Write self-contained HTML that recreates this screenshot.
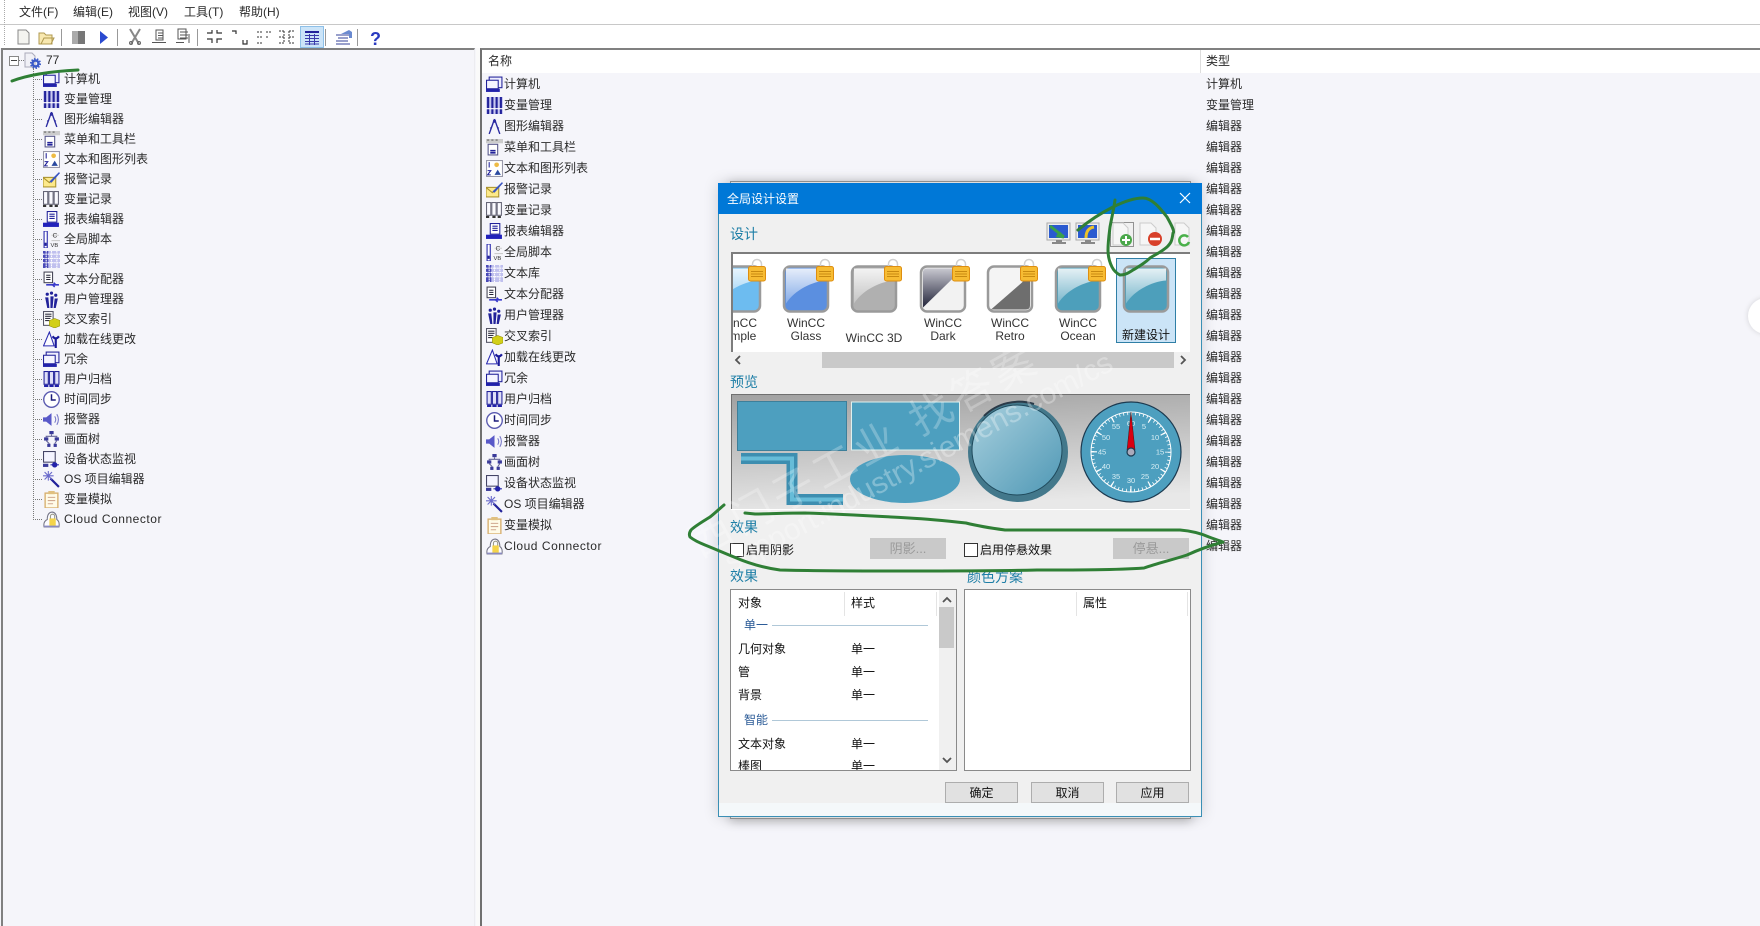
<!DOCTYPE html>
<html lang="zh"><head><meta charset="utf-8"><title>WinCC</title>
<style>
html,body{margin:0;padding:0;width:1760px;height:926px;overflow:hidden;background:#f5f5fa}
body{font:12px/16px "Liberation Sans","Noto Sans CJK SC",sans-serif;color:#2a2a2a;position:relative}
.a{position:absolute;white-space:nowrap}
.t{height:20px;line-height:20px;padding-left:64px;position:relative}
.t svg{position:absolute;left:43px;top:2px;width:17px;height:17px}
.t:before{content:"";position:absolute;left:33px;width:9px;top:10px;border-top:1px dotted #777}
.u{height:21px;line-height:21px;padding-left:504px;position:relative}
.u svg{position:absolute;left:486px;top:2px;width:17px;height:17px}
.y{height:21px;line-height:21px}
.s{letter-spacing:.53px}
.l{color:#1d7ea6;font-size:14px;line-height:18px}
.b{background:#c9c9c9;color:#9a9a9a;text-align:center;line-height:21px;height:21px;width:76px;font-size:13px}
.k{background:#e1e1e1;border:1px solid #adadad;box-sizing:border-box;width:73px;height:21px;text-align:center;line-height:20px;color:#111}
.c{width:12px;height:12px;border:1px solid #333;background:#fff}
.w{font-size:12px;line-height:12.5px;text-align:center;color:#333;width:60px}
.d{color:#111}
</style></head><body>
<svg width="0" height="0" style="position:absolute"><defs>
<symbol id="i1" viewBox="0 0 16 16"><rect x="3" y="1" width="12" height="10" fill="#eef" stroke="#22229a"/><rect x="0.5" y="4" width="11" height="8" fill="#f4f4ff" stroke="#22229a"/><rect x="0" y="12" width="13" height="3" fill="#2222aa"/></symbol>
<symbol id="i2" viewBox="0 0 16 16"><rect width="16" height="16" fill="#c9c9f0"/><path d="M2 0v16M6 0v16M10 0v16M14 0v16" stroke="#22229a" stroke-width="2" /><path d="M0 11h16" stroke="#fff"/></symbol>
<symbol id="i3" viewBox="0 0 16 16"><path d="M8 1 3 15M8 1l5 14M5 10l-1-1M11 10l1-1" fill="none" stroke="#2a2aa0" stroke-width="1.3"/><circle cx="8" cy="3" r="1.5" fill="#2a2aa0"/></symbol>
<symbol id="i4" viewBox="0 0 16 16"><rect y="0" width="16" height="4" fill="#ccc"/><path d="M1 1h2M5 1h2M9 1h2" stroke="#666"/><rect x="2" y="5" width="9" height="10" fill="#fff" stroke="#558"/><path d="M4 11h5M4 13h5" stroke="#22229a" stroke-width="1.5"/></symbol>
<symbol id="i5" viewBox="0 0 16 16"><rect x=".5" y=".5" width="15" height="15" fill="#fff" stroke="#99a"/><circle cx="10" cy="4.500" r="2.200" fill="#eebb44"/><path d="M8 14l3-5 3 5z" fill="#2a4aa0"/><path d="M3 2v5M1.500 10h3l-3 4h3" stroke="#22229a" fill="none"/></symbol>
<symbol id="i6" viewBox="0 0 16 16"><rect x="0" y="6" width="12" height="9" fill="#fde98a" stroke="#a9912d"/><path d="M0 6l6 5 6-5" fill="none" stroke="#a9912d"/><path d="M6 10 15 1l1 1-8 9z" fill="#3a55c0"/></symbol>
<symbol id="i7" viewBox="0 0 16 16"><g fill="#fafaff" stroke="#667"><rect x=".5" y=".5" width="4" height="12"/><rect x="5.500" y=".5" width="4" height="12"/><rect x="10.500" y=".5" width="4" height="12"/></g><path d="M0 14h3M6 14h3M11 14h3" stroke="#333" stroke-width="2"/></symbol>
<symbol id="i8" viewBox="0 0 16 16"><rect x="4" y="0.500" width="9" height="10" fill="#fff" stroke="#22229a"/><path d="M6 3h5M6 5h5M6 7h5" stroke="#22229a"/><path d="M0 11h15v4H0z" fill="#2222bb"/></symbol>
<symbol id="i9" viewBox="0 0 16 16"><rect x="1" y="0" width="3" height="16" fill="#fff" stroke="#2222aa"/><rect x="1.500" y="11" width="2" height="3" fill="#22229a"/><path d="M8 4h7M8 9h8" stroke="#ccc"/><text x="9" y="6" font-size="6" fill="#333" font-family="Liberation Sans">C</text><text x="7" y="15" font-size="5.500" fill="#333" font-family="Liberation Sans">VB</text></symbol>
<symbol id="i10" viewBox="0 0 16 16"><rect width="16" height="16" fill="#c0c0ee"/><rect x="0" y="0" width="5" height="16" fill="#4a4ab8"/><path d="M0 3h16M0 7h16M0 11h16M3 0v16M8 0v16M13 0v16" stroke="#fff" stroke-dasharray="1.500 .6"/></symbol>
<symbol id="i11" viewBox="0 0 16 16"><rect x="1" y="1" width="8" height="10" fill="#fff" stroke="#445"/><path d="M3 4h4M3 6h4M3 8h4" stroke="#223"/><path d="M3 13h9l-2-2M15 13H9l2 2" stroke="#3a3acb" stroke-width="1.500" fill="none"/></symbol>
<symbol id="i12" viewBox="0 0 16 16"><g fill="#22229a"><circle cx="4" cy="3" r="1.500"/><circle cx="8" cy="2" r="1.500"/><circle cx="12" cy="4" r="1.500"/><path d="M2 6h3l1 10H4zM7 5h3l-1 11H7zM11 7h3l-2 9h-2z"/></g></symbol>
<symbol id="i13" viewBox="0 0 16 16"><rect x="0.500" y="0.500" width="9" height="13" fill="#fff" stroke="#556"/><path d="M2 3h6M2 5h6M2 7h5M2 9h4" stroke="#334"/><path d="M6 9l5-2 5 2v5l-5 2-5-2z" fill="#d2cf18" stroke="#8a8700" stroke-width=".5"/></symbol>
<symbol id="i14" viewBox="0 0 16 16"><path d="M6 1 .5 14h10z" fill="#fafaff" stroke="#2a2ab0"/><path d="M12 6v10" stroke="#1a1a9a" stroke-width="2"/><path d="M9 5q3 4 6 0" fill="none" stroke="#1a1a9a" stroke-width="2"/></symbol>
<symbol id="i16" viewBox="0 0 16 16"><g fill="#e0e0f8" stroke="#22229a"><rect x="1" y=".5" width="4" height="12"/><rect x="6" y=".5" width="4" height="12"/><rect x="11" y=".5" width="4" height="12"/></g><path d="M1 14h4M6 14h4M11 14h4" stroke="#2222aa" stroke-width="2"/></symbol>
<symbol id="i17" viewBox="0 0 16 16"><circle cx="8" cy="8" r="7.300" fill="#fff" stroke="#5a5ab0" stroke-width="1.300"/><path d="M8 3v5.500h4" fill="none" stroke="#1a1a7a" stroke-width="1.400"/></symbol>
<symbol id="i18" viewBox="0 0 16 16"><path d="M0 6h3l5-4v12l-5-4H0z" fill="#5858c8"/><path d="M11 5q2 3 0 6M13 3q3 5 0 10" fill="none" stroke="#7878c8"/></symbol>
<symbol id="i19" viewBox="0 0 16 16"><g fill="#3a3a9a"><rect x="6" y="0" width="4" height="3"/><rect x="1" y="6" width="4" height="3"/><rect x="11" y="6" width="4" height="3"/><rect x="4" y="12" width="3" height="3"/><rect x="10" y="12" width="3" height="3"/></g><path d="M8 3v2M3 6V5h10v1M3 9l3 3M13 9l-2 3" stroke="#669" fill="none"/></symbol>
<symbol id="i20" viewBox="0 0 16 16"><rect x=".5" y=".5" width="11" height="10" fill="#f4f4ff" stroke="#446"/><rect y="12" width="5" height="3" fill="#3a3a9a"/><circle cx="11" cy="13" r="2.500" fill="#2222aa"/><path d="M7 13h8" stroke="#2222aa"/></symbol>
<symbol id="i21" viewBox="0 0 16 16"><path d="M7 7l8 8" stroke="#22229a" stroke-width="2"/><path d="M5 0v9M0 4.500h10M1.500 1l7 7M8.500 1l-7 7" stroke="#6a6acb"/></symbol>
<symbol id="i22" viewBox="0 0 16 16"><rect x="2" y="2" width="12" height="14" fill="#fffbe8" stroke="#d8b070" stroke-width="1.300"/><rect x="5" y="0" width="6" height="3" fill="#e0c080"/><path d="M4.500 6h7M4.500 9h7M4.500 12h5" stroke="#d0a890"/></symbol>
<symbol id="i23" viewBox="0 0 16 16"><path d="M1 15q-1-5 3-7 0-7 5-7 4 1 4 7 3 2 2 7z" fill="#fbfbff" stroke="#778"/><rect x="6" y="7" width="6" height="7" fill="#f5d44a"/><path d="M7 7V5a2 2 0 0 1 4 0v2" fill="none" stroke="#998"/><path d="M1 14.500h14" stroke="#8a8ac0" stroke-width="1.500"/></symbol>
<symbol id="lock" viewBox="0 0 18 23"><path d="M4.500 8V5.500a4.500 4.500 0 0 1 9 0V8" fill="none" stroke="#d0d0d0" stroke-width="1.500"/><rect x=".5" y="8" width="17" height="14.500" rx="2" fill="#f7bc33" stroke="#de8e10"/><path d="M3 13h12M3 15.500h12M3 18h12" stroke="#c88a10"/></symbol>
<linearGradient id="gl" x1="0" y1="0" x2="0" y2="1"><stop offset="0" stop-color="#fff" stop-opacity=".85"/><stop offset="1" stop-color="#fff" stop-opacity=".25"/></linearGradient>
<linearGradient id="kn" x1="0" y1="0" x2="1" y2="1"><stop offset="0" stop-color="#a8d0de"/><stop offset="1" stop-color="#4f98b5"/></linearGradient>
<linearGradient id="pv" x1=".1" y1="0" x2=".3" y2="1"><stop offset="0" stop-color="#a2a2a2"/><stop offset="1" stop-color="#e8e8e8"/></linearGradient>
<linearGradient id="dk" x1="0" y1="0" x2="0" y2="1"><stop offset="0" stop-color="#c8c8d0"/><stop offset="1" stop-color="#22243a"/></linearGradient>
<symbol id="gloss" viewBox="0 0 46 46"><path d="M3 3h40v12C30 16 12 24 3 38z" fill="url(#gl)"/></symbol>
</defs></svg>

<!-- menu -->
<div class="a" style="left:0;top:0;width:1760px;height:24px;background:#fff;border-bottom:1px solid #c8c8c8"></div>
<div class="a" style="left:0;top:25px;width:1760px;height:23px;background:#fff"></div>
<div class="a" style="left:4px;top:0;height:45px;border-left:1px dotted #aaa"></div>
<div class="a" style="left:19px;top:4px">文件(F)</div>
<div class="a" style="left:73px;top:4px">编辑(E)</div>
<div class="a" style="left:128px;top:4px">视图(V)</div>
<div class="a" style="left:184px;top:4px">工具(T)</div>
<div class="a" style="left:239px;top:4px">帮助(H)</div>

<!-- toolbar -->
<svg class="a" style="left:0;top:25px" width="400" height="23" viewBox="0 25 400 23">
<path d="M18 30h8l3 3v11H18z" fill="#f4f4f0" stroke="#888"/>
<path d="M39 44V33h5l2 2h6v9zM41 44l3-6h10l-3 6z" fill="#f8e8b0" stroke="#b09a50"/>
<path d="M61.500 29v17M117.500 29v17M197.500 29v17M325.500 29v17M357.500 29v17" stroke="#999"/>
<rect x="72" y="31" width="13" height="13" fill="#777"/><rect x="72" y="31" width="6" height="13" fill="#aaa"/>
<path d="M100 31l8 6.500-8 6.500z" fill="#2a4ad0"/>
<path d="M130 29l9 15M140 29l-9 15" stroke="#888" stroke-width="2"/><circle cx="131" cy="43" r="1.500" fill="none" stroke="#666"/><circle cx="139" cy="43" r="1.500" fill="none" stroke="#666"/>
<path d="M152 42.500h14M156 30h7v10h-7zM158 33h5M158 35.500h5M158 38h5" fill="none" stroke="#555"/>
<path d="M176 42.500h8M178 29h8v10h-8zM180 32h8M180 35h8M180 38h8M189 34v9" fill="none" stroke="#555"/>
<path d="M207 33h5v-3M217 30v3h5M207 39h5v4M217 43v-4h5" fill="none" stroke="#333" stroke-width="1.200"/>
<path d="M232 31h4v3M243 40v4h4v-4" fill="none" stroke="#333" stroke-width="1.200"/>
<path d="M257 32h5M266 32h5M257 37h5M266 37h3M257 43h5" fill="none" stroke="#333" stroke-dasharray="2 1"/>
<path d="M279 31h5M289 31h6M279 37h5M289 37h6M279 43h5M289 43h6M284 31v12M289 31v12" fill="none" stroke="#333" stroke-dasharray="2 1"/>
<rect x="300.500" y="26.500" width="23" height="21" fill="#cbe4f8" stroke="#8ec0e8"/>
<path d="M305 31h14v2h-14z" fill="#22229a"/><path d="M305 35.500h14M305 38.500h14M305 41.500h14M305 44h14M309.500 34v11M314.500 34v11" stroke="#3a3aaa" stroke-width="1"/>
<path d="M336 35h14M338 38h10M336 41h12M336 44h14" stroke="#33409a"/><path d="M341 34l8-4 3 2v6h-3v-4z" fill="#6a8ad0"/>
<text x="370" y="45" font-size="18" font-weight="bold" fill="#2a3ac0" font-family="Liberation Sans">?</text>
</svg>

<!-- panes -->
<div class="a" style="left:1px;top:48px;width:474px;height:878px;border-top:2px solid #808080;border-left:2px solid #808080;border-right:1px solid #ececf0;box-sizing:border-box"></div>
<div class="a" style="left:476px;top:48px;width:4px;height:878px;background:#fafafa"></div>
<div class="a" style="left:480px;top:48px;width:1280px;height:878px;border-top:2px solid #808080;border-left:2px solid #707070;box-sizing:border-box"></div>

<!-- tree -->
<div class="a" style="left:9px;top:56px;width:8px;height:8px;border:1px solid #888;background:#fff"></div>
<div class="a" style="left:11px;top:60px;width:6px;border-top:1px solid #444"></div>
<div class="a" style="left:19px;top:60px;width:5px;border-top:1px dotted #777"></div>
<svg class="a" style="left:24px;top:52px" width="17" height="17" viewBox="0 0 17 17"><path d="M1 1h7l3 3v11H1z" fill="#f0f0f6" stroke="#aab"/><circle cx="11.500" cy="11.500" r="3" fill="none" stroke="#3a5ac8" stroke-width="2.500"/><circle cx="11.500" cy="11.500" r="4.800" fill="none" stroke="#3a5ac8" stroke-dasharray="1.500 1.500" stroke-width="1.500"/></svg>
<div class="a" style="left:46px;top:52px">77</div>
<div class="a" style="left:32.500px;top:68px;height:452px;border-left:1px dotted #777"></div>

<div class="a" style="left:0;top:69px;width:470px;white-space:normal">
<div class="t"><svg><use href="#i1"/></svg>计算机</div>
<div class="t"><svg><use href="#i2"/></svg>变量管理</div>
<div class="t"><svg><use href="#i3"/></svg>图形编辑器</div>
<div class="t"><svg><use href="#i4"/></svg>菜单和工具栏</div>
<div class="t"><svg><use href="#i5"/></svg>文本和图形列表</div>
<div class="t"><svg><use href="#i6"/></svg>报警记录</div>
<div class="t"><svg><use href="#i7"/></svg>变量记录</div>
<div class="t"><svg><use href="#i8"/></svg>报表编辑器</div>
<div class="t"><svg><use href="#i9"/></svg>全局脚本</div>
<div class="t"><svg><use href="#i10"/></svg>文本库</div>
<div class="t"><svg><use href="#i11"/></svg>文本分配器</div>
<div class="t"><svg><use href="#i12"/></svg>用户管理器</div>
<div class="t"><svg><use href="#i13"/></svg>交叉索引</div>
<div class="t"><svg><use href="#i14"/></svg>加载在线更改</div>
<div class="t"><svg><use href="#i1"/></svg>冗余</div>
<div class="t"><svg><use href="#i16"/></svg>用户归档</div>
<div class="t"><svg><use href="#i17"/></svg>时间同步</div>
<div class="t"><svg><use href="#i18"/></svg>报警器</div>
<div class="t"><svg><use href="#i19"/></svg>画面树</div>
<div class="t"><svg><use href="#i20"/></svg>设备状态监视</div>
<div class="t"><svg><use href="#i21"/></svg>OS 项目编辑器</div>
<div class="t"><svg><use href="#i22"/></svg>变量模拟</div>
<div class="t"><svg><use href="#i23"/></svg><span class="s">Cloud Connector</span></div>
</div>

<!-- right pane -->
<div class="a" style="left:482px;top:50px;width:1278px;height:23px;background:#fff"></div>
<div class="a" style="left:1200px;top:50px;height:23px;border-left:1px solid #ddd"></div>
<div class="a" style="left:488px;top:53px">名称</div>
<div class="a" style="left:1206px;top:53px">类型</div>

<div class="a" style="left:0;top:73.500px;width:718px;white-space:normal">
<div class="u"><svg><use href="#i1"/></svg>计算机</div>
<div class="u"><svg><use href="#i2"/></svg>变量管理</div>
<div class="u"><svg><use href="#i3"/></svg>图形编辑器</div>
<div class="u"><svg><use href="#i4"/></svg>菜单和工具栏</div>
<div class="u"><svg><use href="#i5"/></svg>文本和图形列表</div>
<div class="u"><svg><use href="#i6"/></svg>报警记录</div>
<div class="u"><svg><use href="#i7"/></svg>变量记录</div>
<div class="u"><svg><use href="#i8"/></svg>报表编辑器</div>
<div class="u"><svg><use href="#i9"/></svg>全局脚本</div>
<div class="u"><svg><use href="#i10"/></svg>文本库</div>
<div class="u"><svg><use href="#i11"/></svg>文本分配器</div>
<div class="u"><svg><use href="#i12"/></svg>用户管理器</div>
<div class="u"><svg><use href="#i13"/></svg>交叉索引</div>
<div class="u"><svg><use href="#i14"/></svg>加载在线更改</div>
<div class="u"><svg><use href="#i1"/></svg>冗余</div>
<div class="u"><svg><use href="#i16"/></svg>用户归档</div>
<div class="u"><svg><use href="#i17"/></svg>时间同步</div>
<div class="u"><svg><use href="#i18"/></svg>报警器</div>
<div class="u"><svg><use href="#i19"/></svg>画面树</div>
<div class="u"><svg><use href="#i20"/></svg>设备状态监视</div>
<div class="u"><svg><use href="#i21"/></svg>OS 项目编辑器</div>
<div class="u"><svg><use href="#i22"/></svg>变量模拟</div>
<div class="u"><svg><use href="#i23"/></svg><span class="s">Cloud Connector</span></div>
</div>

<div class="a" style="left:1206px;top:73.500px">
<div class="y">计算机</div><div class="y">变量管理</div><div class="y">编辑器</div><div class="y">编辑器</div><div class="y">编辑器</div><div class="y">编辑器</div><div class="y">编辑器</div><div class="y">编辑器</div><div class="y">编辑器</div><div class="y">编辑器</div><div class="y">编辑器</div><div class="y">编辑器</div><div class="y">编辑器</div><div class="y">编辑器</div><div class="y">编辑器</div><div class="y">编辑器</div><div class="y">编辑器</div><div class="y">编辑器</div><div class="y">编辑器</div><div class="y">编辑器</div><div class="y">编辑器</div><div class="y">编辑器</div><div class="y">编辑器</div>
</div>

<!-- right edge circle -->
<div class="a" style="left:1748px;top:298px;width:36px;height:36px;border-radius:50%;background:#fff;box-shadow:0 0 6px rgba(0,0,0,.14)"></div>

<!-- back window -->
<div class="a" style="left:730px;top:181px;width:461px;height:638px;background:#f0f0f0;border:1px solid #999;box-sizing:border-box;box-shadow:0 2px 10px rgba(0,0,0,.25)"></div>

<!-- dialog -->
<div class="a" style="left:718px;top:183px;width:484px;height:634px;background:#f0f0f0;border:1px solid #3a8fb5;box-sizing:border-box;box-shadow:0 0 14px rgba(0,0,0,.16)"></div>
<div class="a" style="left:719px;top:803px;width:482px;height:13px;background:#f4f8fa"></div>
<div class="a" style="left:718px;top:183px;width:484px;height:31px;background:#0078d7"></div>
<div class="a" style="left:727px;top:191px;color:#fff">全局设计设置</div>
<svg class="a" style="left:1179px;top:192px" width="12" height="12"><path d="M1 1l10 10M11 1L1 11" stroke="#fff" stroke-width="1.200"/></svg>

<div class="a l" style="left:730px;top:225px">设计</div>

<!-- dialog toolbar -->
<svg class="a" style="left:1045px;top:220px" width="148" height="30" viewBox="1045 220 148 30">
<rect x="1047" y="223" width="23" height="17" fill="#eee" stroke="#aaa"/><rect x="1049" y="225" width="19" height="13" fill="#2a5ad0"/><path d="M1050 226l14 11M1060 232l-2 4 6 1" fill="none" stroke="#3aa04a" stroke-width="3"/><path d="M1052 243h14M1056 241h6" stroke="#888" stroke-width="2"/>
<rect x="1076" y="223" width="23" height="17" fill="#eee" stroke="#aaa"/><rect x="1078" y="225" width="19" height="13" fill="#2a5ad0"/><path d="M1094 227c-6 1-8 5-8 11" fill="none" stroke="#ecc22a" stroke-width="3"/><path d="M1081 243h14M1085 241h6" stroke="#888" stroke-width="2"/>
<rect x="1110.500" y="222.500" width="23" height="24" fill="none" stroke="#333" stroke-dasharray="1 1"/>
<path d="M1113 223h10l5 5v17h-15z" fill="#f6f6f6" stroke="#ccc"/><circle cx="1126" cy="240" r="6" fill="#4aa84a"/><path d="M1122 240h8M1126 236v8" stroke="#fff" stroke-width="2"/>
<path d="M1140 223h11l5 5v17h-16z" fill="#f6f6f6" stroke="#ccc"/><circle cx="1155" cy="239" r="7" fill="#d8402a"/><path d="M1150 239h10" stroke="#fff" stroke-width="2.500"/>
<path d="M1175 223h9l5 5v17h-14z" fill="#f6f6f6" stroke="#ccc"/><path d="M1188 237a5 5 0 1 0 1 5" fill="none" stroke="#4ab04a" stroke-width="2.500"/>
</svg>

<!-- design list -->
<div class="a" style="left:731px;top:251.500px;width:459px;height:100px;background:#fff;border-top:2px solid #7d7d7d;border-left:2px solid #7d7d7d;box-sizing:border-box;overflow:hidden">
<div class="a" style="left:383px;top:4.500px;width:60px;height:85px;background:#cbe4f7;border:1px solid #2f7fa6;box-sizing:border-box"></div>
<svg class="a" style="left:-2px;top:0" width="459" height="70" viewBox="731 253.500 459 70">
<g stroke="#9a9a9a" stroke-width="2.500"><rect x="716" y="266" width="44" height="45" rx="6" fill="#6dbcf0"/><rect x="784" y="266" width="44" height="45" rx="6" fill="#5b8fe0"/><rect x="852" y="266" width="44" height="45" rx="6" fill="#b0b0b0"/><rect x="921" y="266" width="44" height="45" rx="6" fill="#f2f2f2"/><rect x="988" y="266" width="44" height="45" rx="6" fill="#f4f4f4"/><rect x="1056" y="266" width="44" height="45" rx="6" fill="#4d9fbb"/><rect x="1124" y="266" width="44" height="45" rx="6" fill="#4d9fbb"/></g>
<path d="M923 307 963 268H927q-4 0-4 4z" fill="url(#dk)"/>
<path d="M991 309 1022 282 1030 272V305q0 4-4 4z" fill="#6e6e6e"/>
<use href="#gloss" x="715" y="265" width="46" height="46"/><use href="#gloss" x="783" y="265" width="46" height="46"/><use href="#gloss" x="851" y="265" width="46" height="46"/><use href="#gloss" x="1055" y="265" width="46" height="46"/><use href="#gloss" x="1123" y="265" width="46" height="46"/>
<use href="#lock" x="748" y="258" width="18" height="23"/><use href="#lock" x="816" y="258" width="18" height="23"/><use href="#lock" x="884" y="258" width="18" height="23"/><use href="#lock" x="952" y="258" width="18" height="23"/><use href="#lock" x="1020" y="258" width="18" height="23"/><use href="#lock" x="1088" y="258" width="18" height="23"/>
</svg>
<div class="a w" style="left:-25px;top:63.500px">WinCC<br>Simple</div>
<div class="a w" style="left:43px;top:63.500px">WinCC<br>Glass</div>
<div class="a w" style="left:107px;top:78px;width:68px;line-height:12px">WinCC 3D</div>
<div class="a w" style="left:180px;top:63.500px">WinCC<br>Dark</div>
<div class="a w" style="left:247px;top:63.500px">WinCC<br>Retro</div>
<div class="a w" style="left:315px;top:63.500px">WinCC<br>Ocean</div>
<div class="a w" style="left:383px;top:73.500px;line-height:16px;color:#111">新建设计</div>
</div>

<!-- design scrollbar -->
<div class="a" style="left:731px;top:352px;width:459px;height:16px;background:#f0f0f0"></div>
<div class="a" style="left:822px;top:352px;width:352px;height:16px;background:#c9c9c9"></div>
<svg class="a" style="left:734px;top:355px" width="8" height="10"><path d="M6 1 2 5l4 4" fill="none" stroke="#555" stroke-width="1.800"/></svg>
<svg class="a" style="left:1179px;top:355px" width="8" height="10"><path d="M2 1l4 4-4 4" fill="none" stroke="#555" stroke-width="1.800"/></svg>

<div class="a l" style="left:730px;top:373px">预览</div>

<!-- preview -->
<svg class="a" style="left:731px;top:394px" width="459" height="116" viewBox="731 394 459 116" font-family="Liberation Sans">
<rect x="731" y="394" width="459" height="116" fill="url(#pv)"/>
<path d="M731.500 510V394.500H1190" fill="none" stroke="#707070"/>
<path d="M731 509.500h459" stroke="#fff"/>
<rect x="737.500" y="401.500" width="109" height="49" fill="#4d9fbf" stroke="#3d7f9a"/>
<rect x="851.500" y="402" width="108" height="48" fill="#4d9fbf" stroke="#dff0ee"/>
<path d="M741 458.500H792V499.500H843" fill="none" stroke="#3d8eb0" stroke-width="11"/>
<path d="M741 458.500H792V499.500H843" fill="none" stroke="#66bcd8" stroke-width="4"/>
<ellipse cx="905" cy="479" rx="55" ry="24" fill="#4d9fbf"/>
<circle cx="1018" cy="452" r="50" fill="#43788b"/>
<path d="M984 416a50 50 0 0 1 50-12" fill="none" stroke="#2a3a48" stroke-width="2"/>
<circle cx="1017" cy="450" r="45" fill="url(#kn)" stroke="#1f4a5c" stroke-width="1"/>
<circle cx="1131" cy="452" r="50" fill="#4d9fbf" stroke="#1c3a50" stroke-width="1.200"/>
<circle cx="1131" cy="452" r="40" fill="none" stroke="#fff" stroke-width="1"/>
<circle cx="1131" cy="452" r="38.500" fill="none" stroke="#fff" stroke-width="3" stroke-dasharray=".8 3.231"/>
<circle cx="1131" cy="452" r="37" fill="none" stroke="#fff" stroke-width="6" stroke-dasharray="1.200 18.172" stroke-dashoffset=".6"/>
<g font-size="7.500" fill="#d8eef4" text-anchor="middle"><text x="1144" y="429">5</text><text x="1155" y="440">10</text><text x="1160" y="454.500">15</text><text x="1155" y="469">20</text><text x="1145" y="479">25</text><text x="1131" y="483">30</text><text x="1116" y="479">35</text><text x="1106" y="469">40</text><text x="1102" y="454.500">45</text><text x="1106" y="440">50</text><text x="1116" y="429">55</text><text x="1131" y="426">60</text></g>
<path d="M1131 412l-4 38h8z" fill="#d80010" stroke="#3a1a1a" stroke-width=".5"/>
<circle cx="1131" cy="452" r="4" fill="#aab" stroke="#1c3a50" stroke-width="1.200"/>
</svg>

<div class="a l" style="left:730px;top:518px">效果</div>
<div class="a c" style="left:730px;top:543px"></div>
<div class="a d" style="left:746px;top:542px">启用阴影</div>
<div class="a b" style="left:870px;top:538px">阴影...</div>
<div class="a c" style="left:964px;top:543px"></div>
<div class="a d" style="left:980px;top:542px">启用停悬效果</div>
<div class="a b" style="left:1113px;top:538px">停悬...</div>

<div class="a l" style="left:730px;top:567px">效果</div>
<div class="a l" style="left:967px;top:568px;">颜色方案</div>

<!-- list 1 -->
<div class="a" style="left:730px;top:589px;width:227px;height:182px;background:#fff;border:1px solid #8a8a8a;box-sizing:border-box;overflow:hidden">
<div class="a d" style="left:7px;top:5px">对象</div>
<div class="a d" style="left:120px;top:5px">样式</div>
<div class="a" style="left:113px;top:2px;height:24px;border-left:1px solid #e4e4e4"></div>
<div class="a" style="left:205px;top:2px;height:24px;border-left:1px solid #e4e4e4"></div>
<div class="a" style="left:208px;top:0;width:17px;height:182px;background:#f0f0f0"></div>
<div class="a" style="left:208px;top:17px;width:15px;height:41px;background:#c9c9c9"></div>
<svg class="a" style="left:210px;top:6px" width="12" height="8"><path d="M2 6l4-4 4 4" fill="none" stroke="#555" stroke-width="1.800"/></svg>
<svg class="a" style="left:210px;top:166px" width="12" height="8"><path d="M2 2l4 4 4-4" fill="none" stroke="#555" stroke-width="1.800"/></svg>
<div class="a" style="left:13px;top:27px;color:#2a5a96">单一</div>
<div class="a" style="left:41px;top:35px;width:156px;border-top:1px solid #b0c8d8"></div>
<div class="a d" style="left:7px;top:51px">几何对象</div><div class="a d" style="left:120px;top:51px">单一</div>
<div class="a d" style="left:7px;top:74px">管</div><div class="a d" style="left:120px;top:74px">单一</div>
<div class="a d" style="left:7px;top:97px">背景</div><div class="a d" style="left:120px;top:97px">单一</div>
<div class="a" style="left:13px;top:122px;color:#2a5a96">智能</div>
<div class="a" style="left:41px;top:130px;width:156px;border-top:1px solid #b0c8d8"></div>
<div class="a d" style="left:7px;top:146px">文本对象</div><div class="a d" style="left:120px;top:146px">单一</div>
<div class="a d" style="left:7px;top:168px">棒图</div><div class="a d" style="left:120px;top:168px">单一</div>
</div>

<!-- list 2 -->
<div class="a" style="left:964px;top:589px;width:227px;height:182px;background:#fff;border:1px solid #8a8a8a;box-sizing:border-box">
<div class="a" style="left:111px;top:2px;height:24px;border-left:1px solid #e4e4e4"></div>
<div class="a" style="left:222px;top:2px;height:24px;border-left:1px solid #e4e4e4"></div>
<div class="a d" style="left:118px;top:5px">属性</div>
</div>

<div class="a k" style="left:945px;top:782px">确定</div>
<div class="a k" style="left:1031px;top:782px">取消</div>
<div class="a k" style="left:1116px;top:782px">应用</div>

<!-- watermark -->
<div class="a" style="left:693px;top:521px;font-size:42px;line-height:50px;color:rgba(255,255,255,.25);transform:rotate(-29deg);transform-origin:0 50%;letter-spacing:5px">西门子工业 找答案</div>
<div class="a" style="left:727px;top:547px;font-size:30px;line-height:36px;color:rgba(255,255,255,.3);transform:rotate(-28deg);transform-origin:0 50%">support.industry.siemens.com/cs</div>

<!-- green annotations -->
<svg class="a" style="left:0;top:0;pointer-events:none" width="1760" height="926" fill="none" stroke="#2f7f35" stroke-width="3" stroke-linecap="round" stroke-linejoin="round">
<path d="M12 81Q36 72 78 70"/>
<path d="M1078 230C1090 220 1103 212 1113 207C1125 201 1135 198 1143 198C1152 198 1160 208 1167 217C1172 226 1175 232 1173 233C1172 241 1171 243 1167 247C1160 253 1156 254 1150 258C1144 264 1138 267 1133 270C1127 274 1124 275 1120 275C1116 273 1114 271 1112 267C1109 261 1108 256 1108 250C1108 242 1109 235 1110 227C1112 216 1114 208 1115 200"/>
<path d="M724 505C718 510 714 514 710 517C702 522 695 526 691 530C689 533 689 535 690 537C695 541 700 543 705 545C715 549 724 553 734 557C750 564 765 568 780 570C820 571 860 571 894 571C950 571 990 571 1037 570C1080 570 1115 570 1144 568C1158 563 1172 560 1187 555C1200 549 1212 545 1223 542C1218 540 1214 539 1209 537C1200 533 1192 531 1180 530C1120 530 1060 530 1005 530C990 528 978 526 966 523C948 521 928 519 909 518C875 516 838 514 805 513C785 513 770 514 755 514L745 513"/>
</svg>
</body></html>
